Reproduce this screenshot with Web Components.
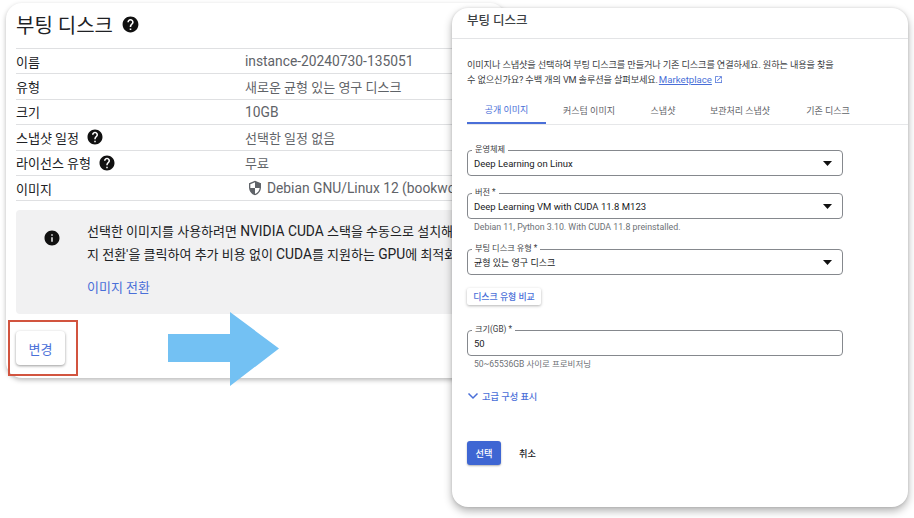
<!DOCTYPE html>
<html lang="ko"><head><meta charset="utf-8">
<style>
html,body{margin:0;padding:0;background:#fff}
body{font-family:Roboto,"Noto Sans CJK KR",sans-serif;color:#202124}
.lat{font-size:13.800px}
</style></head><body>
<x-page>
  <x-left-card slot="left">
    <span slot="title">부팅 디스크</span>
    <x-row label="이름" value="instance-20240730-135051" lat></x-row>
    <x-row label="유형" value="새로운 균형 있는 영구 디스크"></x-row>
    <x-row label="크기" value="10GB" lat></x-row>
    <x-row label="스냅샷 일정" value="선택한 일정 없음" help></x-row>
    <x-row label="라이선스 유형" value="무료" help></x-row>
    <x-row label="이미지" value="Debian GNU/Linux 12 (bookwo" shield lat></x-row>
    <x-info slot="info">
      <span>선택한 이미지를 사용하려면 <span class="lat">NVIDIA CUDA</span> 스택을 수동으로 설치해</span>
      <span>지 전환'을 클릭하여 추가 비용 없이 <span class="lat">CUDA</span>를 지원하는 <span class="lat">GPU</span>에 최적화</span>
      <a slot="link">이미지 전환</a>
    </x-info>
  </x-left-card>
  <x-right-card slot="right"></x-right-card>
</x-page>
<script>
const HELP=s=>`<svg width="${s}" height="${s}" viewBox="0 0 24 24" style="display:block;flex:none"><path fill="#111" d="M12 2C6.48 2 2 6.48 2 12s4.48 10 10 10 10-4.48 10-10S17.52 2 12 2zm1 17h-2v-2h2v2zm2.07-7.75l-.9.92C13.45 12.9 13 13.5 13 15h-2v-.5c0-1.1.45-2.1 1.17-2.83l1.24-1.26c.37-.36.59-.86.59-1.41 0-1.1-.9-2-2-2s-2 .9-2 2H8c0-2.21 1.79-4 4-4s4 1.79 4 4c0 .88-.36 1.68-.93 2.25z"/></svg>`;
function def(name,html){customElements.define(name,class extends HTMLElement{
  constructor(){super();this.attachShadow({mode:'open'});}
  connectedCallback(){this.shadowRoot.innerHTML=typeof html==='function'?html(this):html;}
});}
def('x-page',`<style>
:host{display:block;position:relative;width:914px;height:518px;overflow:hidden}
.arrow{position:absolute;left:168px;top:312px}
.mark{position:absolute;left:8px;top:320px;width:66px;height:52px;border:2px solid #d2543f}
::slotted([slot=right]){position:absolute;left:452px;top:8px}
::slotted([slot=left]){position:absolute;left:6px;top:3px}
</style><slot name="left"></slot>
<svg class="arrow" width="112" height="74" viewBox="0 0 112 74"><path fill="#73c1f3" d="M0 22H62V0L111 36.500 62 74V50H0z"/></svg>
<div class="mark"></div>
<x-change></x-change>
<slot name="right"></slot>`);
def('x-change',`<style>
:host{position:absolute;left:16px;top:331px;width:49px;height:34px;display:flex;align-items:center;justify-content:center;background:#fff;border-radius:4px;box-shadow:0 1px 3px rgba(0,0,0,.4);font-size:13px;color:#4a6fd8}
</style>변경`);
def('x-left-card',`<style>
:host{display:flex;flex-direction:column;width:500px;height:375px;box-sizing:border-box;padding:0 10px;background:#fff;border-radius:16px;box-shadow:0 2px 5px rgba(0,0,0,.28);overflow:hidden}
.head{display:flex;align-items:center;gap:8px;height:43px;padding-bottom:2px;font-size:20px;color:#202124;border-bottom:1px solid #dfe0e2}
.rows{display:flex;flex-direction:column}
.gap{height:8.500px}
</style><div class="head"><slot name="title"></slot>${HELP(19)}</div>
<div class="rows"><slot></slot></div><div class="gap"></div><slot name="info"></slot>`);
def('x-row',el=>`<style>
:host{display:grid;grid-template-columns:229px 1fr;height:25.400px;box-sizing:border-box;border-bottom:1px solid #dfe0e2;align-items:center;font-size:13px;white-space:nowrap}
.l{display:flex;align-items:center;gap:7px;color:#202124}
.v{display:flex;align-items:center;gap:4px;color:#5f6368;${el.hasAttribute('lat')?'font-size:13.800px;':''}}
.s{margin-left:2px}
</style><div class="l"><span>${el.getAttribute('label')}</span>${el.hasAttribute('help')?HELP(18):''}</div>
<div class="v">${el.hasAttribute('shield')?`<svg class="s" width="16" height="16" viewBox="0 0 24 24"><path fill="#5f6368" d="M12 1 3 5v6c0 5.550 3.840 10.740 9 12 5.160-1.260 9-6.450 9-12V5l-9-4zm0 10.990h7c-.53 4.120-3.280 7.790-7 8.940V12H5V6.300l7-3.110v8.800z"/></svg>`:''}<span>${el.getAttribute('value')}</span></div>`);
def('x-info',`<style>
:host{display:block;height:104px;width:100%;box-sizing:border-box;background:#f1f1f2;border-radius:4px;padding:10px 0 0 71px;position:relative;font-size:13px;color:#202124;white-space:nowrap}
.lines{display:flex;flex-direction:column;line-height:22px}
.i{position:absolute;left:27px;top:19px}
.link{margin-top:11px;color:#4a6fd8;line-height:22px;display:block}
</style><svg class="i" width="18" height="18" viewBox="0 0 24 24"><path fill="#111" d="M12 2C6.480 2 2 6.480 2 12s4.480 10 10 10 10-4.480 10-10S17.520 2 12 2zm1 15h-2v-6h2v6zm0-8h-2V7h2v2z"/></svg>
<div class="lines"><slot></slot></div><div class="link"><slot name="link"></slot></div>`);
def('x-tab',el=>`<style>
:host{display:flex;align-items:center;justify-content:center;height:27px;box-sizing:border-box;font-size:9px;color:${el.hasAttribute('active')?'#4a6fd8':'#5f6368'};${el.hasAttribute('active')?'border-bottom:2px solid #4a6fd8;':''}width:${el.getAttribute('w')}px;white-space:nowrap}
</style><slot></slot>`);
def('x-field',el=>`<style>
:host{display:block;position:relative;height:26px;box-sizing:border-box;width:376px;border:1px solid #85888d;border-radius:4px;font-size:${el.hasAttribute('ko')?9:9.500}px;color:#202124}
.label{position:absolute;left:4px;top:-8px;background:#fff;padding:0 3px;font-size:8.200px;line-height:12px;color:#3c4043;white-space:nowrap}
.val{display:flex;align-items:center;justify-content:space-between;height:100%;padding:0 10px 0 6px}
svg{display:block}
</style><span class="label">${el.getAttribute('label')}</span>
<div class="val"><span><slot></slot></span>${el.hasAttribute('input')?'':'<svg width="9" height="5" viewBox="0 0 9 5"><path fill="#111" d="M0 0h9L4.500 5z"/></svg>'}</div>`);
def('x-hint',el=>`<style>
:host{display:block;padding-left:7px;font-size:${el.getAttribute('size')}px;line-height:12px;color:#6d7175;white-space:nowrap}
</style><slot></slot>`);
def('x-right-card',`<style>
:host{display:flex;flex-direction:column;width:456px;height:499px;box-sizing:border-box;background:#fff;border-radius:16px;box-shadow:0 4px 8px rgba(0,0,0,.3),0 0 3px rgba(0,0,0,.12);padding-left:15px;overflow:hidden}
.title{height:30px;margin-left:-15px;padding-left:15px;border-bottom:1px solid #e3e4e6;font-size:12.500px;font-weight:500;line-height:25px;color:#3c4043}
.p{margin-top:18px;font-size:9.200px;letter-spacing:-.14px;line-height:15px;color:#3c4043;height:30px;white-space:nowrap}
.p a{color:#4a6fd8;text-decoration:underline;font-size:9.650px;letter-spacing:0;margin-left:1px}
.ext{display:inline-block;vertical-align:-1px;margin-left:2px}
.tabs{display:flex;margin-top:10px;border-bottom:1px solid #e6e7e9;height:27px}
.f1{margin-top:25px}.f2{margin-top:17px}.f3{margin-top:16px}.f4{margin-top:25px}
.h1{margin-top:2px}.h2{margin-top:2px}
.cmp{margin-top:13px;width:74px;height:17px;display:flex;align-items:center;justify-content:center;background:#fff;border-radius:2px;box-shadow:0 1px 3px rgba(0,0,0,.3);font-size:8.900px;color:#4a6fd8;font-weight:500}
.adv{margin-top:19px;display:flex;align-items:center;gap:3px;font-size:9.200px;font-weight:500;color:#4a6fd8;height:14px}
.btns{margin-top:38px;display:flex;align-items:center}
.ok{width:34px;height:24px;background:#3e66d3;border-radius:3px;color:#fff;font-size:9.200px;display:flex;align-items:center;justify-content:center;box-shadow:0 1px 2px rgba(0,0,0,.3);font-weight:500}
.no{margin-left:18px;font-size:9.200px;color:#202124;font-weight:500}
</style>
<div class="title">부팅 디스크</div>
<div class="p">이미지나 스냅샷을 선택하여 부팅 디스크를 만들거나 기존 디스크를 연결하세요. 원하는 내용을 찾을<br>수 없으신가요? 수백 개의 VM 솔루션을 살펴보세요.<a>Marketplace</a><svg class="ext" width="9" height="9" viewBox="0 0 24 24"><path fill="#4a6fd8" d="M19 19H5V5h7V3H3v18h18v-9h-2v7zM14 3v2h3.590l-9.830 9.830 1.410 1.410L19 6.410V10h2V3h-7z"/></svg></div>
<div class="tabs"><x-tab active w="79">공개 이미지</x-tab><x-tab w="86">커스텀 이미지</x-tab><x-tab w="62">스냅샷</x-tab><x-tab w="92">보관처리 스냅샷</x-tab><x-tab w="84">기존 디스크</x-tab></div>
<x-field class="f1" label="운영체제">Deep Learning on Linux</x-field>
<x-field class="f2" label="버전 *">Deep Learning VM with CUDA 11.8 M123</x-field>
<x-hint class="h1" size="8.800">Debian 11, Python 3.10. With CUDA 11.8 preinstalled.</x-hint>
<x-field class="f3" ko label="부팅 디스크 유형 *">균형 있는 영구 디스크</x-field>
<div class="cmp">디스크 유형 비교</div>
<x-field class="f4" label="크기(GB) *" input>50</x-field>
<x-hint class="h2" size="8.500">50~65536GB 사이로 프로비저닝</x-hint>
<div class="adv"><svg width="12" height="12" viewBox="0 0 12 12"><path fill="none" stroke="#4a6fd8" stroke-width="1.500" d="M1.500 3.500 6 8l4.500-4.500"/></svg><span>고급 구성 표시</span></div>
<div class="btns"><div class="ok">선택</div><div class="no">취소</div></div>`);
</script>
</body></html>
